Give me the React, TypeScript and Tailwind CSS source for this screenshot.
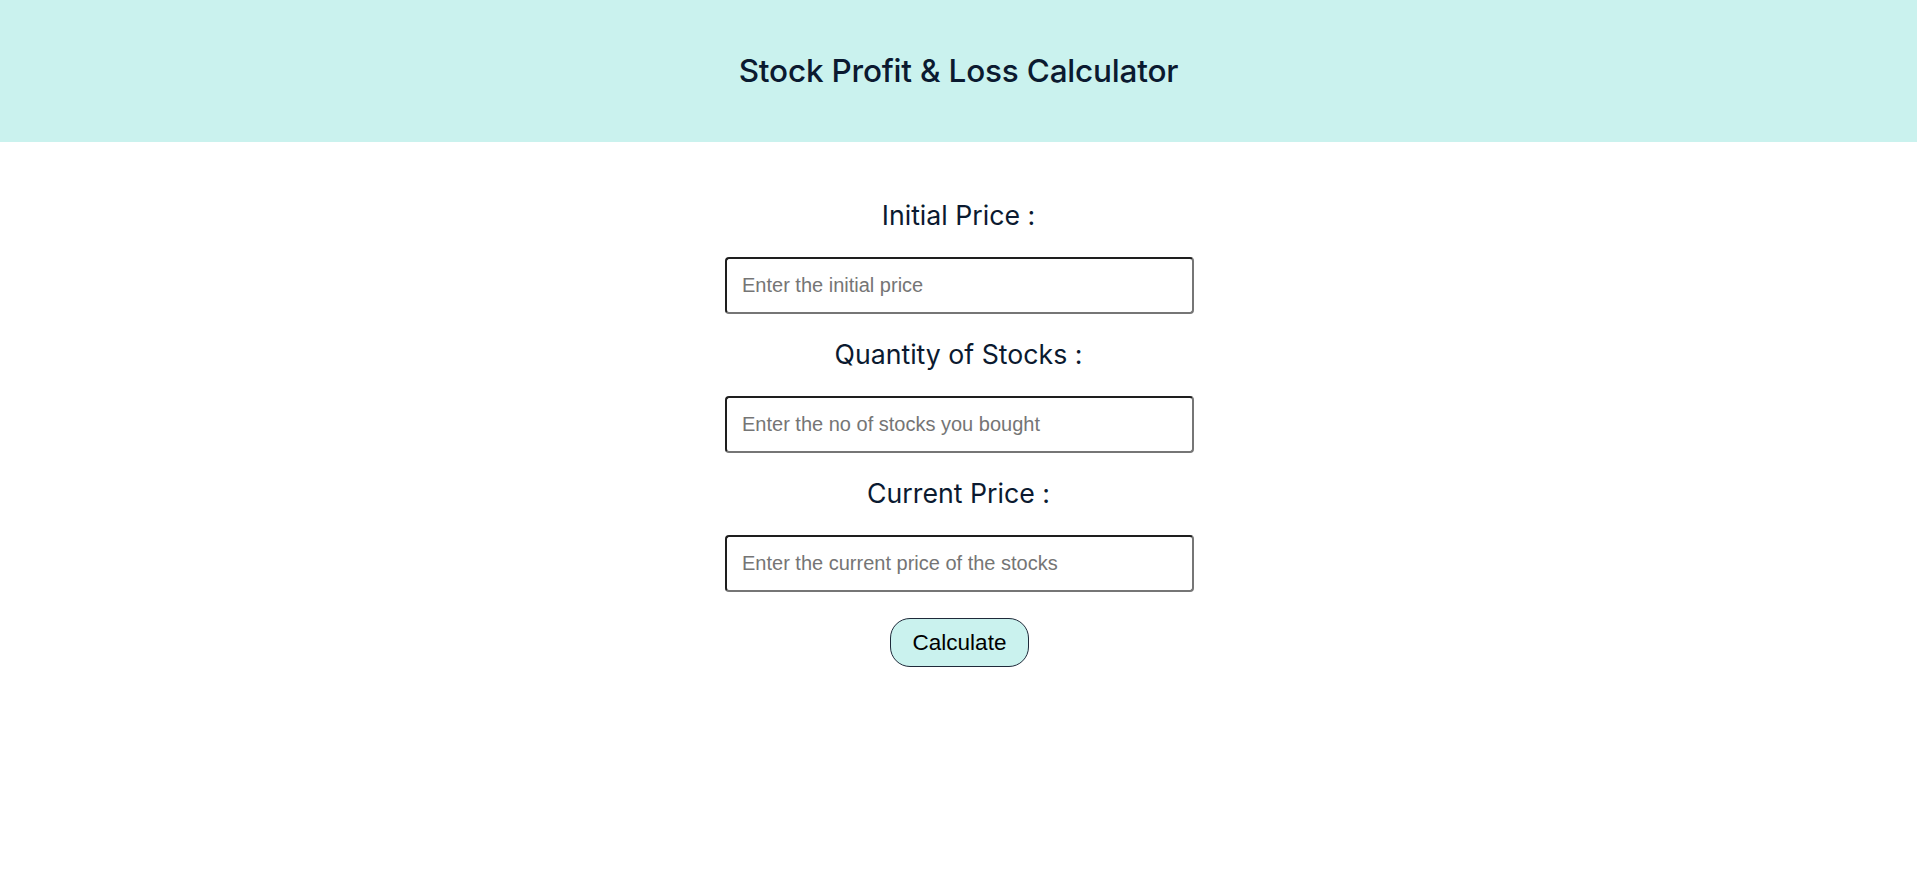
import { useState } from 'react';

const fields = [
  { label: 'Initial Price :', placeholder: 'Enter the initial price' },
  { label: 'Quantity of Stocks :', placeholder: 'Enter the no of stocks you bought' },
  { label: 'Current Price :', placeholder: 'Enter the current price of the stocks' },
];

export default function App() {
  const [values, setValues] = useState<string[]>(['', '', ''])

  return (
    <div className="min-h-screen bg-white">
      {/* header */}
      <header className="h-[142px] bg-[#caf2ee] flex items-center justify-center">
        <h1 className="font-['Inter',sans-serif] font-medium text-[31.5px] text-[#0b1a30] tracking-[-0.2px]">
          Stock Profit &amp; Loss Calculator
        </h1>
      </header>

      <main className="flex flex-col items-center pt-[33px]">
        {fields.map((f, i) => (
          <div key={i} className="flex flex-col items-center">
            <label className="mt-[20px] mb-[22px] leading-[40px] font-['Inter',sans-serif] text-[26.7px] text-[#0b1a30]">
              {f.label}
            </label>
            <input
              type="text"
              value={values[i]}
              onChange={e => {
                const next = [...values]
                next[i] = e.target.value
                setValues(next)
              }}
              placeholder={f.placeholder}
              className="ml-[2px] w-[469px] h-[57px] px-[15px] rounded-[4px] border-2 border-t-[#1e1e1e] border-l-[#1e1e1e] border-b-[#767676] border-r-[#767676] font-['Liberation_Sans',Arial,sans-serif] text-[20px] text-black placeholder:text-[#757575] outline-none"
            />
          </div>
        ))}

        <button className="mt-[26px] ml-[2px] h-[49px] px-[22px] rounded-[20px] border border-[#1f2a3a] bg-[#caf2ee] font-['Liberation_Sans',Arial,sans-serif] text-[22.5px] text-black">
          Calculate
        </button>
      </main>
    </div>
  );
}
